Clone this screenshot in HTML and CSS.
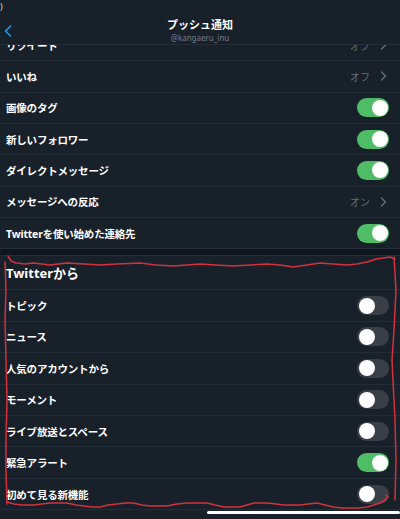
FILE: index.html
```html
<!DOCTYPE html>
<html lang="ja">
<head>
    <meta charset="UTF-8">
    <meta name="viewport" content="width=device-width, initial-scale=1.0">
    <title>プッシュ通知</title>
    <link rel="stylesheet" href="styles.css">
</head>
<body>
    <header class="topbar">
        <div class="status">)</div>
        <div class="nav">
            <svg class="back" width="8" height="12" viewBox="0 0 8 12"><path d="M6.5 1 L1.5 6 L6.5 11" fill="none" stroke="#1d9bf0" stroke-width="1.6" stroke-linecap="round" stroke-linejoin="round"/></svg>
            <div class="titles">
                <div class="title">プッシュ通知</div>
                <div class="handle">@kangaeru_inu</div>
            </div>
            <span></span>
        </div>
    </header>

    <div class="viewport">
        <div class="list">
            <div class="row cut">
                <span class="label">リツイート</span>
                <span class="value">オフ <svg width="7" height="10" viewBox="0 0 7 10"><path d="M1.5 1 L5.5 5 L1.5 9" fill="none" stroke="currentColor" stroke-width="1.4" stroke-linecap="round"/></svg></span>
            </div>
            <div class="row">
                <span class="label">いいね</span>
                <span class="value">オフ <svg width="7" height="10" viewBox="0 0 7 10"><path d="M1.5 1 L5.5 5 L1.5 9" fill="none" stroke="currentColor" stroke-width="1.4" stroke-linecap="round"/></svg></span>
            </div>
            <div class="row">
                <span class="label">画像のタグ</span>
                <span class="toggle on"></span>
            </div>
            <div class="row">
                <span class="label">新しいフォロワー</span>
                <span class="toggle on"></span>
            </div>
            <div class="row">
                <span class="label">ダイレクトメッセージ</span>
                <span class="toggle on"></span>
            </div>
            <div class="row">
                <span class="label">メッセージへの反応</span>
                <span class="value">オン <svg width="7" height="10" viewBox="0 0 7 10"><path d="M1.5 1 L5.5 5 L1.5 9" fill="none" stroke="currentColor" stroke-width="1.4" stroke-linecap="round"/></svg></span>
            </div>
            <div class="row">
                <span class="label">Twitterを使い始めた連絡先</span>
                <span class="toggle on"></span>
            </div>

            <div class="gap"></div>

            <div class="row section">
                <span class="section-title">Twitterから</span>
            </div>
            <div class="row tall">
                <span class="label">トピック</span>
                <span class="toggle"></span>
            </div>
            <div class="row tall">
                <span class="label">ニュース</span>
                <span class="toggle"></span>
            </div>
            <div class="row tall">
                <span class="label">人気のアカウントから</span>
                <span class="toggle"></span>
            </div>
            <div class="row tall">
                <span class="label">モーメント</span>
                <span class="toggle"></span>
            </div>
            <div class="row tall">
                <span class="label">ライブ放送とスペース</span>
                <span class="toggle"></span>
            </div>
            <div class="row tall">
                <span class="label">緊急アラート</span>
                <span class="toggle on"></span>
            </div>
            <div class="row tall">
                <span class="label">初めて見る新機能</span>
                <span class="toggle"></span>
            </div>
        </div>
    </div>

    <div class="home"><div class="home-bar"></div></div>

    <!-- hand-drawn red marking over the "Twitterから" section -->
    <svg class="marker" width="400" height="519" viewBox="0 0 400 519">
        <g fill="none" stroke="#d3323d" stroke-width="1.5" stroke-linecap="round" stroke-linejoin="round">
            <polyline points="8,256 11,261 16,263 25,264 33,263 42,264 50,265 58,264 67,263 84,264 100,265 117,264 140,263 156,265 173,266 187,265 200,264 216,265 233,266 250,265 267,264 280,265 293,267 307,265 320,263 333,264 347,265 357,264 367,262 376,259 383,258 390,257 395,259"/>
            <polyline points="5,262 6,290 5,320 6,360 7,400 6,440 6,470 7,504"/>
            <polyline points="394,257 396,290 394,330 392,360 393,380 395,420 396,460 395,500"/>
            <polyline points="7,502 14,504 22,505 33,505 42,504 50,503 58,503 67,503 76,505 84,506 92,507 100,507 108,505 117,504 125,503 133,503 142,505 150,506 158,506 167,506 177,504 187,503 197,503 207,503 215,505 224,507 232,507 240,507 247,505 254,503 260,503 267,503 276,504 284,505 292,505 300,505 308,504 317,503 325,505 333,507 342,508 350,508 358,508 367,507 374,505 380,503 385,500 388,497 386,495"/>
        </g>
    </svg>
</body>
</html>
```

FILE: styles.css
```css
body {
    margin: 0;
    width: 400px;
    height: 519px;
    overflow: hidden;
    position: relative;
    background-color: #18202a;
    color: #fff;
    font-family: "Noto Sans", "Noto Sans CJK JP", sans-serif;
}
.topbar {
    height: 45px;
    box-sizing: border-box;
    border-bottom: 1px solid #252e39;
}
.status {
    height: 18px;
    font-size: 9px;
    line-height: 14px;
    color: #cfd3d9;
}
.nav {
    display: grid;
    grid-template-columns: 24px 1fr 24px;
    align-items: center;
}
.back {
    margin-left: 4px;
}
.titles {
    text-align: center;
}
.title {
    font-size: 11px;
    font-weight: 700;
    line-height: 14px;
}
.handle {
    font-size: 8px;
    line-height: 11px;
    color: #737b86;
}
.viewport {
    overflow: hidden;
}
.row {
    display: flex;
    align-items: center;
    justify-content: space-between;
    height: 31.33px;
    box-sizing: border-box;
    padding: 0 11px 0 6px;
    border-bottom: 1px solid #242c37;
}
.row.cut {
    margin-top: -15px;
}
.row.tall {
    height: 31.43px;
}
.row.section {
    height: 34px;
}
.label {
    font-size: 10.5px;
    font-weight: 700;
    letter-spacing: -0.2px;
}
.section-title {
    font-size: 13px;
    font-weight: 700;
}
.value {
    display: flex;
    align-items: center;
    gap: 10px;
    font-size: 10px;
    color: #656d78;
    margin-right: 2px;
}
.toggle {
    display: flex;
    align-items: center;
    width: 32px;
    height: 19px;
    padding: 1.5px;
    box-sizing: border-box;
    border-radius: 10px;
    background-color: #3a3f47;
}
.toggle::after {
    content: "";
    width: 16px;
    height: 16px;
    border-radius: 50%;
    background-color: #fff;
}
.toggle.on {
    justify-content: flex-end;
    background-color: #4fbd66;
}
.gap {
    height: 7px;
    background-color: #10161d;
    border-bottom: 1px solid #242c37;
    box-sizing: border-box;
}
.home {
    padding-top: 1px;
}
.home-bar {
    margin-left: 207px;
    height: 3px;
    border-radius: 2px;
    background-color: #fff;
}
.marker {
    position: absolute;
    top: 0;
    left: 0;
    pointer-events: none;
}
```
